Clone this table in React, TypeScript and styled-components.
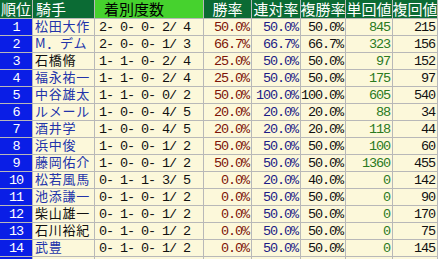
import React from "react";
import styled, { createGlobalStyle, css } from "styled-components";

const GlobalStyle = createGlobalStyle`
  html, body {
    margin: 0;
    padding: 0;
    background: #ffffff;
    overflow: hidden;
  }
`;

const colors = {
  headGreen: "#0b6b34",
  headLight: "#46d22e",
  rank: "#0a1ee6",
  cream: "#fcf8da",
  line: "#b8b8b8",
  link: "#2233aa",
  win: "#7d1408",
  place: "#1c1c86",
  tan: "#2a7a1e",
};

const jp = `"Noto Sans CJK JP", "Noto Sans", sans-serif`;
const mono = `"Liberation Mono", "DejaVu Sans Mono", monospace`;

const Table = styled.div`
  display: grid;
  grid-template-columns: 32px 61px 108px 47px 48px 44px 46px 44px;
  grid-template-rows: 18px;
  grid-auto-rows: 16px;
  gap: 1px;
  width: max-content;
  padding: 0 1px 1px 0;
  background: ${colors.line};
`;

const cellBox = css`
  display: flex;
  align-items: center;
  min-width: 0;
  line-height: 1;
  white-space: pre;
  overflow: hidden;
`;

// digits sit 1px lower than the middle of the row
const numFont = css`
  padding-top: 2px;
  font-family: ${mono};
  font-size: 13.5px;
  letter-spacing: -1.1px;
`;

const HeadCell = styled.div<{ $light?: boolean; $align?: string; $pad?: number }>`
  ${cellBox};
  justify-content: ${(p) => p.$align || "center"};
  padding-left: ${(p) => p.$pad || 0}px;
  padding-bottom: 1px;
  background: ${(p) => (p.$light ? colors.headLight : colors.headGreen)};
  color: ${(p) => (p.$light ? "#000" : "#fff")};
  font-family: ${jp};
  font-size: 15px;
`;

const RankCell = styled.div`
  ${cellBox};
  ${numFont};
  justify-content: center;
  background: ${colors.rank};
  color: #fff;
`;

const NameCell = styled.div<{ $link?: boolean }>`
  padding-left: 2px;
  background: ${colors.cream};
  color: ${(p) => (p.$link ? colors.link : "#111")};
  font-family: ${jp};
  font-size: 13px;
  letter-spacing: 0.75px;
  line-height: 13px;
  white-space: pre;
  overflow: hidden;
`;

const RecordCell = styled.div`
  ${cellBox};
  ${numFont};
  padding-left: 4px;
  background: ${colors.cream};
  color: #111;
`;

const NumCell = styled.div<{ $color?: string }>`
  ${cellBox};
  ${numFont};
  justify-content: flex-end;
  padding-right: 2px;
  background: ${colors.cream};
  color: ${(p) => p.$color || "#111"};
`;

type Row = {
  name: string;
  link: boolean;
  rec: string;
  win: string;
  ren: string;
  fuku: string;
  tan: string;
  fukuVal: string;
};

const rows: Row[] = [
  { name: "松田大作", link: true, rec: "2- 0- 0- 2/ 4", win: "50.0%", ren: "50.0%", fuku: "50.0%", tan: "845", fukuVal: "215" },
  { name: "M．デム", link: true, rec: "2- 0- 0- 1/ 3", win: "66.7%", ren: "66.7%", fuku: "66.7%", tan: "323", fukuVal: "156" },
  { name: "石橋脩", link: false, rec: "1- 1- 0- 2/ 4", win: "25.0%", ren: "50.0%", fuku: "50.0%", tan: "97", fukuVal: "152" },
  { name: "福永祐一", link: true, rec: "1- 1- 0- 2/ 4", win: "25.0%", ren: "50.0%", fuku: "50.0%", tan: "175", fukuVal: "97" },
  { name: "中谷雄太", link: true, rec: "1- 1- 0- 0/ 2", win: "50.0%", ren: "100.0%", fuku: "100.0%", tan: "605", fukuVal: "540" },
  { name: "ルメール", link: true, rec: "1- 0- 0- 4/ 5", win: "20.0%", ren: "20.0%", fuku: "20.0%", tan: "88", fukuVal: "34" },
  { name: "酒井学", link: true, rec: "1- 0- 0- 4/ 5", win: "20.0%", ren: "20.0%", fuku: "20.0%", tan: "118", fukuVal: "44" },
  { name: "浜中俊", link: true, rec: "1- 0- 0- 1/ 2", win: "50.0%", ren: "50.0%", fuku: "50.0%", tan: "100", fukuVal: "60" },
  { name: "藤岡佑介", link: true, rec: "1- 0- 0- 1/ 2", win: "50.0%", ren: "50.0%", fuku: "50.0%", tan: "1360", fukuVal: "455" },
  { name: "松若風馬", link: true, rec: "0- 1- 1- 3/ 5", win: "0.0%", ren: "20.0%", fuku: "40.0%", tan: "0", fukuVal: "142" },
  { name: "池添謙一", link: true, rec: "0- 1- 0- 1/ 2", win: "0.0%", ren: "50.0%", fuku: "50.0%", tan: "0", fukuVal: "90" },
  { name: "柴山雄一", link: false, rec: "0- 1- 0- 1/ 2", win: "0.0%", ren: "50.0%", fuku: "50.0%", tan: "0", fukuVal: "170" },
  { name: "石川裕紀", link: false, rec: "0- 1- 0- 1/ 2", win: "0.0%", ren: "50.0%", fuku: "50.0%", tan: "0", fukuVal: "75" },
  { name: "武豊", link: true, rec: "0- 1- 0- 1/ 2", win: "0.0%", ren: "50.0%", fuku: "50.0%", tan: "0", fukuVal: "145" },
];

export default function App() {
  return (
    <>
      <GlobalStyle />
      <Table>
        <HeadCell>順位</HeadCell>
        <HeadCell $align="flex-start" $pad={3}>騎手</HeadCell>
        <HeadCell $light $align="flex-start" $pad={9}>着別度数</HeadCell>
        <HeadCell>勝率</HeadCell>
        <HeadCell>連対率</HeadCell>
        <HeadCell>複勝率</HeadCell>
        <HeadCell>単回値</HeadCell>
        <HeadCell>複回値</HeadCell>
        {rows.map((r, i) => (
          <React.Fragment key={i}>
            <RankCell>{i + 1}</RankCell>
            <NameCell $link={r.link}>{r.name}</NameCell>
            <RecordCell>{r.rec}</RecordCell>
            <NumCell $color={colors.win}>{r.win}</NumCell>
            <NumCell $color={colors.place}>{r.ren}</NumCell>
            <NumCell>{r.fuku}</NumCell>
            <NumCell $color={colors.tan}>{r.tan}</NumCell>
            <NumCell>{r.fukuVal}</NumCell>
          </React.Fragment>
        ))}
        <RankCell />
        <NameCell />
        <RecordCell />
        <NumCell />
        <NumCell />
        <NumCell />
        <NumCell />
        <NumCell />
      </Table>
    </>
  );
}
